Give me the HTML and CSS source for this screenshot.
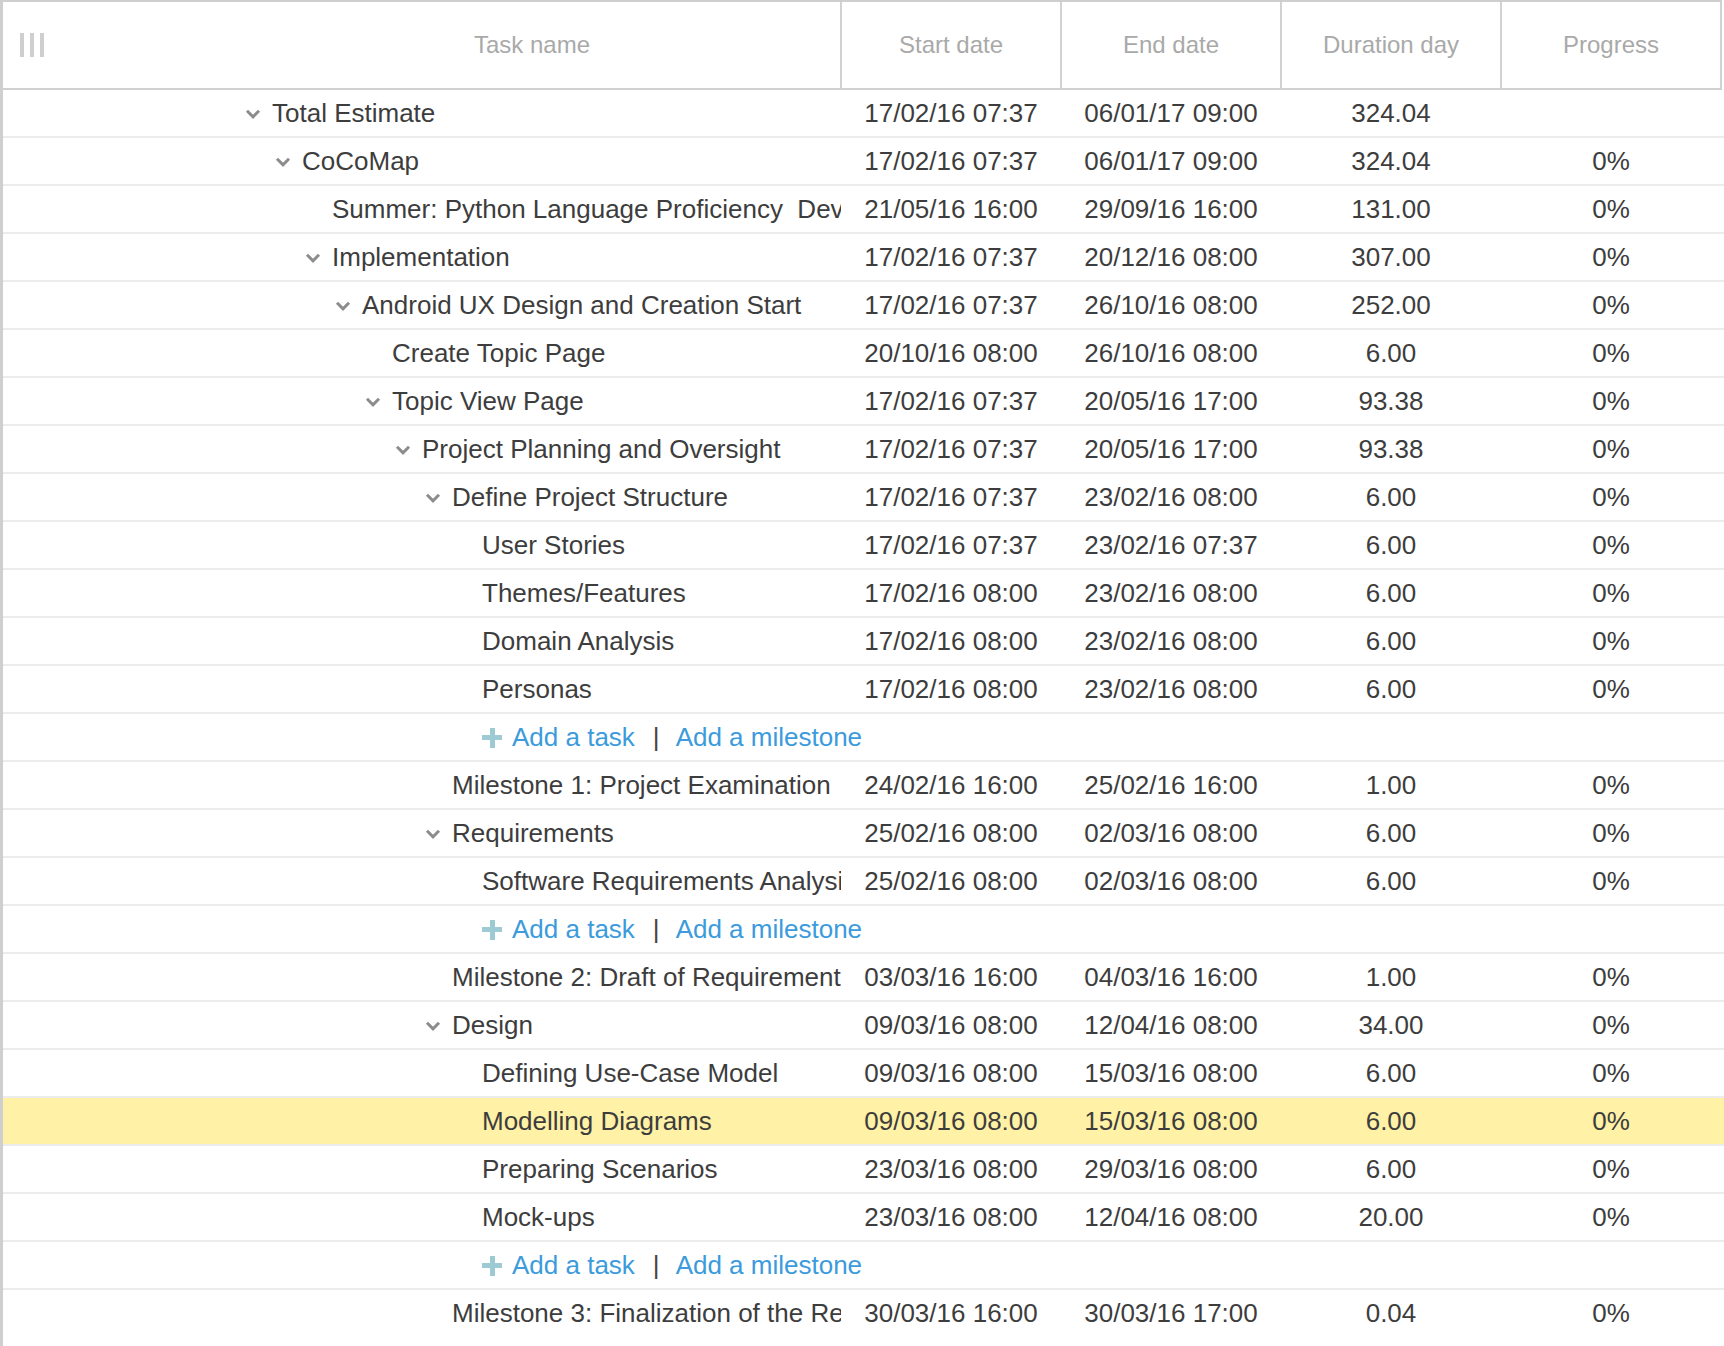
FILE: index.html
```html
<!DOCTYPE html>
<html>
<head>
<meta charset="utf-8">
<title>Task grid</title>
<link rel="stylesheet" href="styles.css">
</head>
<body>
<div class="grid">
  <div class="head">
    <div class="hcell hname">
      <span class="grip"><i></i><i></i><i></i></span>
      <span class="hlabel">Task name</span>
    </div>
    <div class="hcell">Start date</div>
    <div class="hcell">End date</div>
    <div class="hcell">Duration day</div>
    <div class="hcell hlast">Progress</div>
  </div>

  <div class="rows">
    <div class="row"><div class="name l0"><span class="tog"><svg viewBox="0 0 16 10" width="16" height="10"><polyline points="2,1.8 8,7.8 14,1.8"/></svg></span><span class="txt">Total Estimate</span></div><div class="c">17/02/16 07:37</div><div class="c">06/01/17 09:00</div><div class="c">324.04</div><div class="c"></div></div>
    <div class="row"><div class="name l1"><span class="tog"><svg viewBox="0 0 16 10" width="16" height="10"><polyline points="2,1.8 8,7.8 14,1.8"/></svg></span><span class="txt">CoCoMap</span></div><div class="c">17/02/16 07:37</div><div class="c">06/01/17 09:00</div><div class="c">324.04</div><div class="c">0%</div></div>
    <div class="row"><div class="name l2"><span class="tog"></span><span class="txt">Summer: Python Language Proficiency&nbsp; Development</span></div><div class="c">21/05/16 16:00</div><div class="c">29/09/16 16:00</div><div class="c">131.00</div><div class="c">0%</div></div>
    <div class="row"><div class="name l2"><span class="tog"><svg viewBox="0 0 16 10" width="16" height="10"><polyline points="2,1.8 8,7.8 14,1.8"/></svg></span><span class="txt">Implementation</span></div><div class="c">17/02/16 07:37</div><div class="c">20/12/16 08:00</div><div class="c">307.00</div><div class="c">0%</div></div>
    <div class="row"><div class="name l3"><span class="tog"><svg viewBox="0 0 16 10" width="16" height="10"><polyline points="2,1.8 8,7.8 14,1.8"/></svg></span><span class="txt">Android UX Design and Creation Start</span></div><div class="c">17/02/16 07:37</div><div class="c">26/10/16 08:00</div><div class="c">252.00</div><div class="c">0%</div></div>
    <div class="row"><div class="name l4"><span class="tog"></span><span class="txt">Create Topic Page</span></div><div class="c">20/10/16 08:00</div><div class="c">26/10/16 08:00</div><div class="c">6.00</div><div class="c">0%</div></div>
    <div class="row"><div class="name l4"><span class="tog"><svg viewBox="0 0 16 10" width="16" height="10"><polyline points="2,1.8 8,7.8 14,1.8"/></svg></span><span class="txt">Topic View Page</span></div><div class="c">17/02/16 07:37</div><div class="c">20/05/16 17:00</div><div class="c">93.38</div><div class="c">0%</div></div>
    <div class="row"><div class="name l5"><span class="tog"><svg viewBox="0 0 16 10" width="16" height="10"><polyline points="2,1.8 8,7.8 14,1.8"/></svg></span><span class="txt">Project Planning and Oversight</span></div><div class="c">17/02/16 07:37</div><div class="c">20/05/16 17:00</div><div class="c">93.38</div><div class="c">0%</div></div>
    <div class="row"><div class="name l6"><span class="tog"><svg viewBox="0 0 16 10" width="16" height="10"><polyline points="2,1.8 8,7.8 14,1.8"/></svg></span><span class="txt">Define Project Structure</span></div><div class="c">17/02/16 07:37</div><div class="c">23/02/16 08:00</div><div class="c">6.00</div><div class="c">0%</div></div>
    <div class="row"><div class="name l7"><span class="tog"></span><span class="txt">User Stories</span></div><div class="c">17/02/16 07:37</div><div class="c">23/02/16 07:37</div><div class="c">6.00</div><div class="c">0%</div></div>
    <div class="row"><div class="name l7"><span class="tog"></span><span class="txt">Themes/Features</span></div><div class="c">17/02/16 08:00</div><div class="c">23/02/16 08:00</div><div class="c">6.00</div><div class="c">0%</div></div>
    <div class="row"><div class="name l7"><span class="tog"></span><span class="txt">Domain Analysis</span></div><div class="c">17/02/16 08:00</div><div class="c">23/02/16 08:00</div><div class="c">6.00</div><div class="c">0%</div></div>
    <div class="row"><div class="name l7"><span class="tog"></span><span class="txt">Personas</span></div><div class="c">17/02/16 08:00</div><div class="c">23/02/16 08:00</div><div class="c">6.00</div><div class="c">0%</div></div>
    <div class="row addrow"><div class="add l7"><span class="tog"></span><span class="plus"></span><a class="lnk">Add a task</a><span class="sep">|</span><a class="lnk">Add a milestone</a></div></div>
    <div class="row"><div class="name l6"><span class="tog"></span><span class="txt">Milestone 1: Project Examination</span></div><div class="c">24/02/16 16:00</div><div class="c">25/02/16 16:00</div><div class="c">1.00</div><div class="c">0%</div></div>
    <div class="row"><div class="name l6"><span class="tog"><svg viewBox="0 0 16 10" width="16" height="10"><polyline points="2,1.8 8,7.8 14,1.8"/></svg></span><span class="txt">Requirements</span></div><div class="c">25/02/16 08:00</div><div class="c">02/03/16 08:00</div><div class="c">6.00</div><div class="c">0%</div></div>
    <div class="row"><div class="name l7"><span class="tog"></span><span class="txt">Software Requirements Analysis</span></div><div class="c">25/02/16 08:00</div><div class="c">02/03/16 08:00</div><div class="c">6.00</div><div class="c">0%</div></div>
    <div class="row addrow"><div class="add l7"><span class="tog"></span><span class="plus"></span><a class="lnk">Add a task</a><span class="sep">|</span><a class="lnk">Add a milestone</a></div></div>
    <div class="row"><div class="name l6"><span class="tog"></span><span class="txt">Milestone 2: Draft of Requirements</span></div><div class="c">03/03/16 16:00</div><div class="c">04/03/16 16:00</div><div class="c">1.00</div><div class="c">0%</div></div>
    <div class="row"><div class="name l6"><span class="tog"><svg viewBox="0 0 16 10" width="16" height="10"><polyline points="2,1.8 8,7.8 14,1.8"/></svg></span><span class="txt">Design</span></div><div class="c">09/03/16 08:00</div><div class="c">12/04/16 08:00</div><div class="c">34.00</div><div class="c">0%</div></div>
    <div class="row"><div class="name l7"><span class="tog"></span><span class="txt">Defining Use-Case Model</span></div><div class="c">09/03/16 08:00</div><div class="c">15/03/16 08:00</div><div class="c">6.00</div><div class="c">0%</div></div>
    <div class="row selected"><div class="name l7"><span class="tog"></span><span class="txt">Modelling Diagrams</span></div><div class="c">09/03/16 08:00</div><div class="c">15/03/16 08:00</div><div class="c">6.00</div><div class="c">0%</div></div>
    <div class="row"><div class="name l7"><span class="tog"></span><span class="txt">Preparing Scenarios</span></div><div class="c">23/03/16 08:00</div><div class="c">29/03/16 08:00</div><div class="c">6.00</div><div class="c">0%</div></div>
    <div class="row"><div class="name l7"><span class="tog"></span><span class="txt">Mock-ups</span></div><div class="c">23/03/16 08:00</div><div class="c">12/04/16 08:00</div><div class="c">20.00</div><div class="c">0%</div></div>
    <div class="row addrow"><div class="add l7"><span class="tog"></span><span class="plus"></span><a class="lnk">Add a task</a><span class="sep">|</span><a class="lnk">Add a milestone</a></div></div>
    <div class="row last"><div class="name l6"><span class="tog"></span><span class="txt">Milestone 3: Finalization of the Requirements</span></div><div class="c">30/03/16 16:00</div><div class="c">30/03/16 17:00</div><div class="c">0.04</div><div class="c">0%</div></div>
  </div>
</div>
</body>
</html>
```

FILE: styles.css
```css
html, body {
  margin: 0;
  padding: 0;
  background: #ffffff;
}

body {
  font-family: "Liberation Sans", Arial, Helvetica, sans-serif;
  color: #3d3d3d;
  width: 1724px;
  height: 1346px;
  overflow: hidden;
}

.grid {
  border-left: 3px solid #cfcfcf;
  min-height: 1346px;
  box-sizing: border-box;
}

/* Header */
.head {
  display: grid;
  grid-template-columns: 837px repeat(4, 220px);
  height: 90px;
  box-sizing: border-box;
  border-top: 2px solid #cfcfcf;
  border-bottom: 2px solid #d0d0d0;
  margin-right: 2px;
  width: 1719px;
}

.hcell {
  display: flex;
  align-items: center;
  justify-content: center;
  border-left: 2px solid #d2d2d2;
  font-size: 24px;
  color: #a9a9a9;
  box-sizing: border-box;
}

.hcell.hlast {
  border-right: 2px solid #d2d2d2;
  width: 222px;
}

.hcell.hname {
  border-left: none;
  justify-content: flex-start;
  padding-left: 17px;
}

.grip {
  display: flex;
  gap: 6px;
  width: 24px;
  height: 24px;
}

.grip i {
  display: block;
  width: 4px;
  height: 24px;
  background: #cfcfcf;
}

.hlabel {
  flex: 1;
  margin-left: 180px;
  text-align: center;
}

/* Body rows */
.row {
  display: grid;
  grid-template-columns: 838px repeat(4, 220px) 1fr;
  height: 48px;
  box-sizing: border-box;
  border-bottom: 2px solid #ececec;
  font-size: 26px;
  line-height: 46px;
}

.row.last {
  border-bottom-color: transparent;
}

.row.selected {
  background: #fff1a6;
}

.c {
  text-align: center;
  white-space: nowrap;
}

.name, .add {
  display: flex;
  align-items: center;
  white-space: nowrap;
  overflow: hidden;
  padding-left: 243px;
  box-sizing: border-box;
}

.add {
  overflow: visible;
  grid-column: 1 / -1;
}

.tog {
  flex: 0 0 27px;
  height: 46px;
  display: flex;
  align-items: center;
  padding-top: 2px;
  box-sizing: border-box;
}

.tog svg polyline {
  fill: none;
  stroke: #8c8c8c;
  stroke-width: 3;
  stroke-linecap: butt;
  stroke-linejoin: miter;
}

.txt {
  white-space: pre;
}

.l0 { padding-left: 242px; }
.l1 { padding-left: 272px; }
.l2 { padding-left: 302px; }
.l3 { padding-left: 332px; }
.l4 { padding-left: 362px; }
.l5 { padding-left: 392px; }
.l6 { padding-left: 422px; }
.l7 { padding-left: 452px; }

.add .plus {
  position: relative;
  flex: 0 0 20px;
  height: 20px;
  margin-left: 0;
  margin-right: 10px;
  margin-top: 1px;
}

.add .plus::before,
.add .plus::after {
  content: "";
  position: absolute;
  background: #9dcad3;
}

.add .plus::before {
  left: 7.5px;
  top: 0;
  width: 5px;
  height: 20px;
}

.add .plus::after {
  left: 0;
  top: 7.5px;
  width: 20px;
  height: 5px;
}

.lnk {
  color: #3b9bdc;
  text-decoration: none;
}

.sep {
  color: #444444;
  margin: 0 16px 0 18px;
}
```
